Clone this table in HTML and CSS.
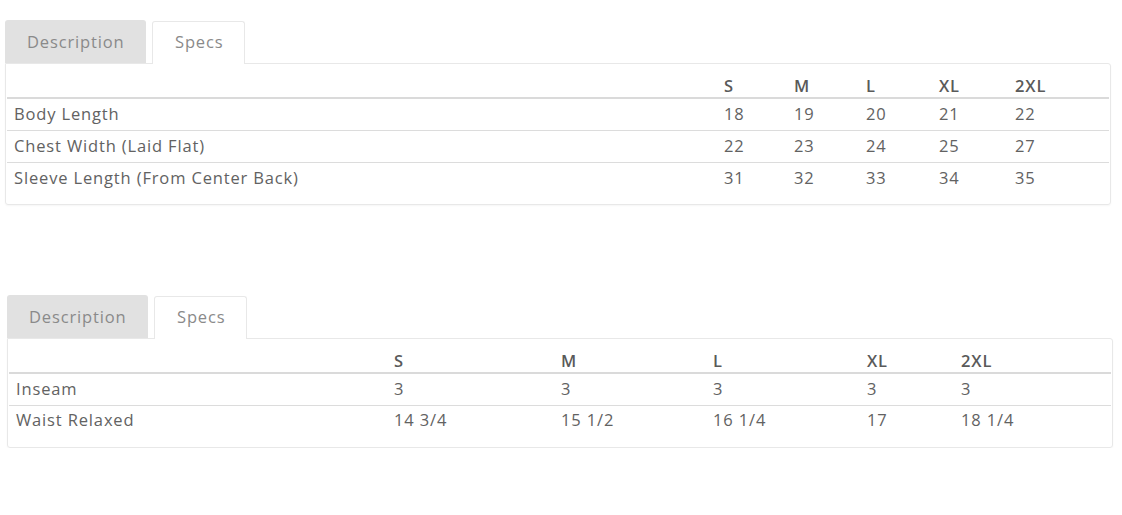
FILE: index.html
```html
<!DOCTYPE html>
<html>
<head>
<meta charset="utf-8">
<link rel="stylesheet" href="styles.css">
</head>
<body>
<div class="page">
  <section class="spec spec-top">
    <div class="tabs">
      <div class="tab tab-off">Description</div>
      <div class="tab tab-on">Specs</div>
    </div>
    <div class="panel">
      <table class="grid grid-a">
        <colgroup>
          <col class="a-label"><col class="a-s"><col class="a-m"><col class="a-l"><col class="a-xl"><col class="a-2xl">
        </colgroup>
        <thead>
          <tr><th></th><th>S</th><th>M</th><th>L</th><th>XL</th><th>2XL</th></tr>
        </thead>
        <tbody>
          <tr><td>Body Length</td><td>18</td><td>19</td><td>20</td><td>21</td><td>22</td></tr>
          <tr><td>Chest Width (Laid Flat)</td><td>22</td><td>23</td><td>24</td><td>25</td><td>27</td></tr>
          <tr><td>Sleeve Length (From Center Back)</td><td>31</td><td>32</td><td>33</td><td>34</td><td>35</td></tr>
        </tbody>
      </table>
    </div>
  </section>

  <section class="spec spec-bottom">
    <div class="tabs">
      <div class="tab tab-off">Description</div>
      <div class="tab tab-on">Specs</div>
    </div>
    <div class="panel">
      <table class="grid grid-b">
        <colgroup>
          <col class="b-label"><col class="b-s"><col class="b-m"><col class="b-l"><col class="b-xl"><col class="b-2xl">
        </colgroup>
        <thead>
          <tr><th></th><th>S</th><th>M</th><th>L</th><th>XL</th><th>2XL</th></tr>
        </thead>
        <tbody>
          <tr><td>Inseam</td><td>3</td><td>3</td><td>3</td><td>3</td><td>3</td></tr>
          <tr class="row-short"><td>Waist Relaxed</td><td>14 3/4</td><td>15 1/2</td><td>16 1/4</td><td>17</td><td>18 1/4</td></tr>
        </tbody>
      </table>
    </div>
  </section>
</div>
</body>
</html>
```

FILE: styles.css
```css
* { box-sizing: border-box; }

html, body {
  margin: 0;
  padding: 0;
  background: #ffffff;
}

body {
  font-family: "Open Sans", "DejaVu Sans", sans-serif;
  font-size: 16.5px;
  color: #626262;
  letter-spacing: 0.85px;
}

.page {
  padding: 20px 11px 0 5px;
}

.spec-bottom {
  margin-top: 90px;
  margin-left: 2px;
  margin-right: -2px;
}

.tabs {
  display: flex;
  gap: 6px;
  align-items: flex-end;
  height: 43px;
}

.tab {
  height: 43px;
  padding: 0 22px 1px;
  display: flex;
  align-items: center;
  border-radius: 3px 3px 0 0;
  color: #8a8a8a;
}

.tab-off {
  background: #e1e1e1;
  width: 141px;
}

.tab-on {
  background: #ffffff;
  border: 1px solid #e8e8e8;
  border-bottom: none;
  height: 43px;
  width: 93px;
  padding-bottom: 3px;
  margin-bottom: -1px;
  position: relative;
  z-index: 1;
}

.panel {
  border: 1px solid #e8e8e8;
  border-radius: 0 3px 3px 3px;
  padding: 2px 2px 10px 1px;
  box-shadow: 0 1px 2px rgba(0,0,0,0.04);
}

.grid {
  width: 100%;
  border-collapse: collapse;
  table-layout: fixed;
}

.grid th,
.grid td {
  text-align: left;
  padding: 0 7px 1px;
  height: 32px;
  vertical-align: middle;
  white-space: nowrap;
}

.grid th {
  height: 32px;
  font-weight: 600;
  color: #5a5a5a;
  padding-top: 8px;
  padding-bottom: 0;
  border-bottom: 2px solid #dadada;
}

.grid-b th {
  height: 31px;
}

.grid tbody tr + tr td {
  border-top: 1px solid #dcdcdc;
}

.grid .row-short td {
  padding-bottom: 3px;
}

.a-label { width: 710px; }
.a-s { width: 70px; }
.a-m { width: 72px; }
.a-l { width: 73px; }
.a-xl { width: 76px; }
.a-2xl { width: 101px; }

.b-label { width: 378px; }
.b-s { width: 167px; }
.b-m { width: 152px; }
.b-l { width: 154px; }
.b-xl { width: 94px; }
.b-2xl { width: 157px; }
```
